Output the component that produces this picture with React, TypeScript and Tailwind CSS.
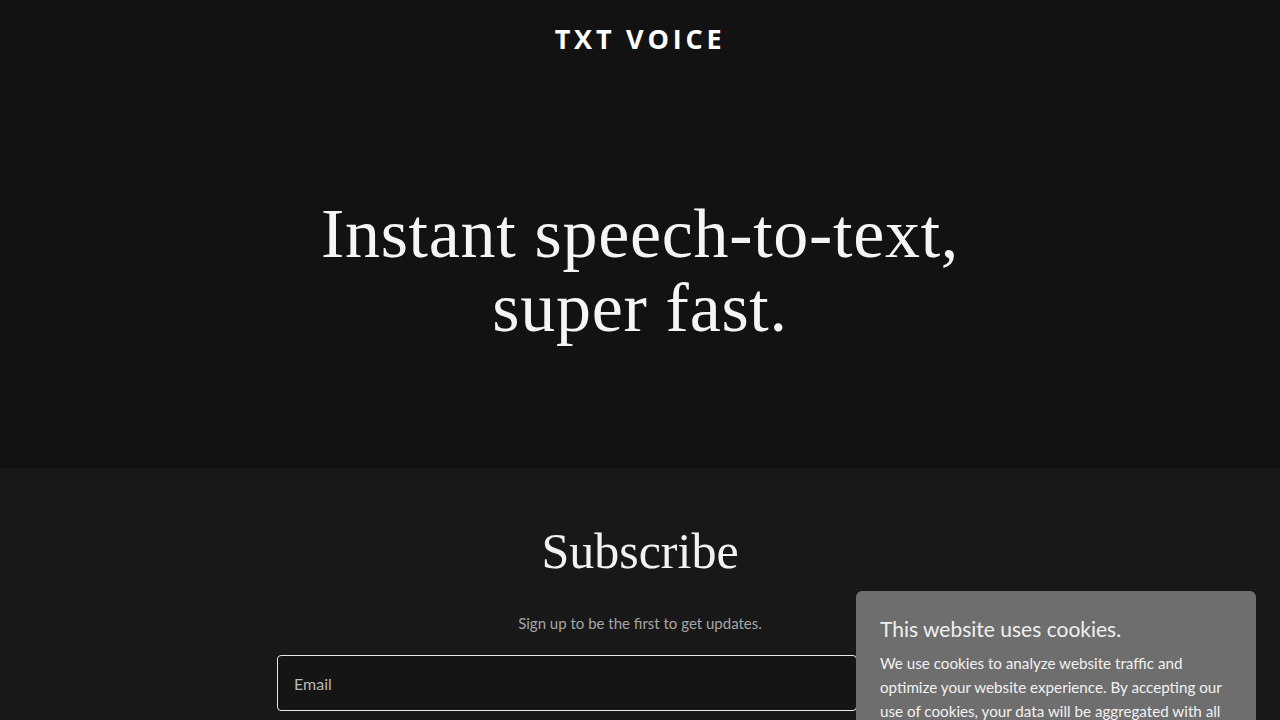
import React from 'react'

const serif = { fontFamily: '"Liberation Serif", "DejaVu Serif", serif' }

export default function App() {
  return (
    <div className="min-h-screen bg-[#181818] font-['Lato','Noto_Sans',sans-serif]">
      <header className="bg-[#121212] pt-[22px] pb-[10px] flex justify-center">
        <h1 className="text-white font-['Open_Sans',sans-serif] font-bold text-[27px] tracking-[0.14em] leading-[34px]">
          TXT VOICE
        </h1>
      </header>

      <section className="bg-[#121212] h-[402px] flex items-center justify-center pt-[8px]">
        <h2
          className="text-[#f5f5f5] text-center text-[70px] leading-[74px] tracking-[0.01em]"
          style={serif}
        >
          Instant speech-to-text,
          <br />
          super fast.
        </h2>
      </section>

      <section className="relative pt-[53px] flex flex-col items-center">
        <h3 className="text-[#f2f2f2] text-[50px] leading-[60px]" style={serif}>
          Subscribe
        </h3>
        <p className="mt-[31px] text-[15px] text-[#a5a5a5] leading-[22px]">
          Sign up to be the first to get updates.
        </p>
        <form className="mt-[21px] flex w-[726px]" onSubmit={(e) => e.preventDefault()}>
          <input
            type="email"
            placeholder="Email"
            className="w-[580px] h-[56px] rounded-[4px] border border-[#e8e8e8] bg-[#151515] px-4 text-[16px] text-white placeholder:text-[#b8b8b8] outline-none"
          />
        </form>

        <div className="fixed left-[856px] top-[591px] w-[400px] rounded-[6px] bg-[#6e6e6e] px-6 pt-[22px] pb-6">
          <p className="text-[#f0f0f0] text-[21px] leading-[32px]">This website uses cookies.</p>
          <p className="mt-[6px] text-[#f2f2f2] text-[15.2px] leading-[24px]">
            We use cookies to analyze website traffic and optimize your website experience. By
            accepting our use of cookies, your data will be aggregated with all other user data.
          </p>
        </div>
      </section>
    </div>
  )
}
